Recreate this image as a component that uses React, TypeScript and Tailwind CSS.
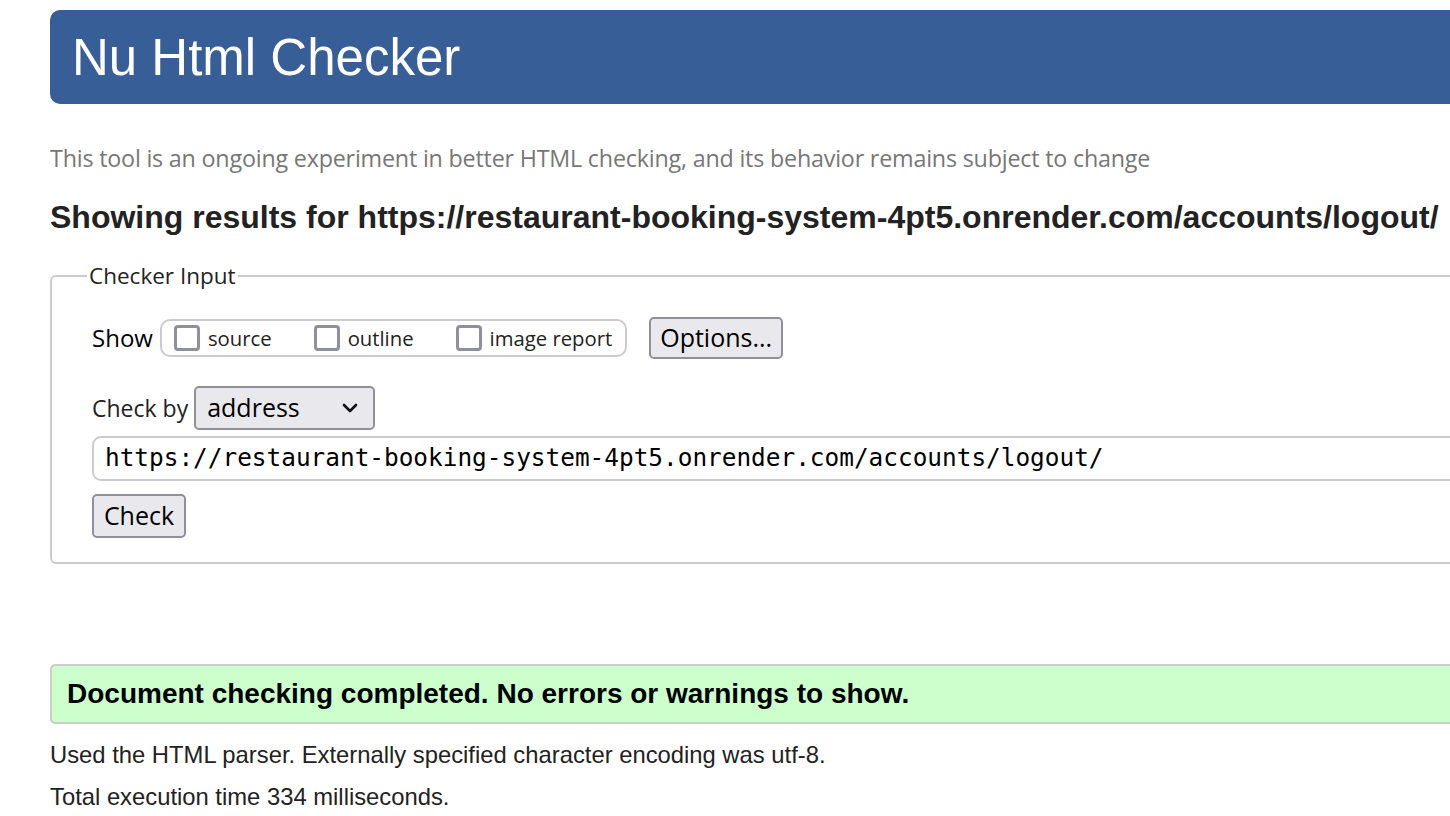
import React from 'react';

const sans = { fontFamily: '"Liberation Sans", Arial, sans-serif' };
const ui = { fontFamily: '"Open Sans", "Noto Sans", sans-serif' };
const mono = { fontFamily: '"DejaVu Sans Mono", "Liberation Mono", monospace' };

function Box({ label }: { label: string }) {
  return (
    <label className="flex items-center gap-[8px]">
      <span className="inline-block w-[26px] h-[26px] border-[3px] border-[#8f8f9d] rounded-[4px] bg-white" />
      <span>{label}</span>
    </label>
  );
}

export default function App() {
  return (
    <div className="w-full overflow-hidden bg-white min-h-[816px]">
      <div className="w-[1500px] pl-[50px] text-[#222]" style={sans}>
        {/* title bar */}
        <div className="mt-[10px] h-[94px] bg-[#375e97] rounded-l-[10px] flex items-center pl-[22px]">
          <h1 className="text-white text-[51px] leading-none">Nu Html Checker</h1>
        </div>

        <p className="mt-[43px] text-[#777] text-[23.3px] leading-none tracking-[-0.2px]" style={ui}>
          This tool is an ongoing experiment in better HTML checking, and its behavior remains subject to change
        </p>

        <h2 className="mt-[31px] text-[32px] font-bold leading-none">
          Showing results for https://restaurant-booking-system-4pt5.onrender.com/accounts/logout/
        </h2>

        {/* checker input */}
        <fieldset className="mt-[26px] border-2 border-[#ccc] rounded-[6px] pl-[40px] pb-[24px] text-[23px] text-black" style={ui}>
          <legend className="ml-[-5px] px-[2px] text-[22.5px] text-[#222]">Checker Input</legend>

          <div className="mt-[24px] flex items-center">
            <span className="mr-[7px] text-[24px]">Show</span>
            <div className="h-[38px] border-2 border-[#ccc] rounded-[10px] flex items-center gap-[42px] pl-[12px] pr-[13px] text-[20.3px] text-[#222]">
              <Box label="source" />
              <Box label="outline" />
              <Box label="image report" />
            </div>
            <button className="ml-[22px] h-[42px] px-[9px] bg-[#e9e9ed] border-2 border-[#8f8f9d] rounded-[5px] text-[25px] text-black">
              Options...
            </button>
          </div>

          <div className="mt-[27px] flex items-center">
            <span className="mr-[6px] text-[#222]">Check by</span>
            <div className="w-[181px] h-[44px] bg-[#e9e9ed] border-2 border-[#8f8f9d] rounded-[5px] flex items-center justify-between pl-[11px] pr-[14px] text-[25px]">
              <span>address</span>
              <svg width="18" height="12" viewBox="0 0 18 12" fill="none" stroke="#111" strokeWidth="2.6" strokeLinecap="round" strokeLinejoin="round">
                <path d="M3 3l6 6 6-6" />
              </svg>
            </div>
          </div>

          <div className="mt-[6px] h-[45px] border-2 border-[#ccc] rounded-[9px] flex items-center pl-[11px] text-[24.4px]" style={mono}>
            https://restaurant-booking-system-4pt5.onrender.com/accounts/logout/
          </div>

          <button className="mt-[13px] w-[94px] h-[44px] bg-[#e9e9ed] border-2 border-[#8f8f9d] rounded-[5px] text-[25px] text-black">
            Check
          </button>
        </fieldset>

        {/* result */}
        <div className="mt-[100px] h-[60px] bg-[#ccffcc] border-2 border-[#ccc] rounded-[5px] flex items-center pl-[15px]">
          <span className="text-[28px] font-bold text-black">Document checking completed. No errors or warnings to show.</span>
        </div>

        <p className="mt-[19px] text-[23.8px] leading-none">Used the HTML parser. Externally specified character encoding was utf-8.</p>
        <p className="mt-[18px] text-[23.8px] leading-none">Total execution time 334 milliseconds.</p>
      </div>
    </div>
  );
}
